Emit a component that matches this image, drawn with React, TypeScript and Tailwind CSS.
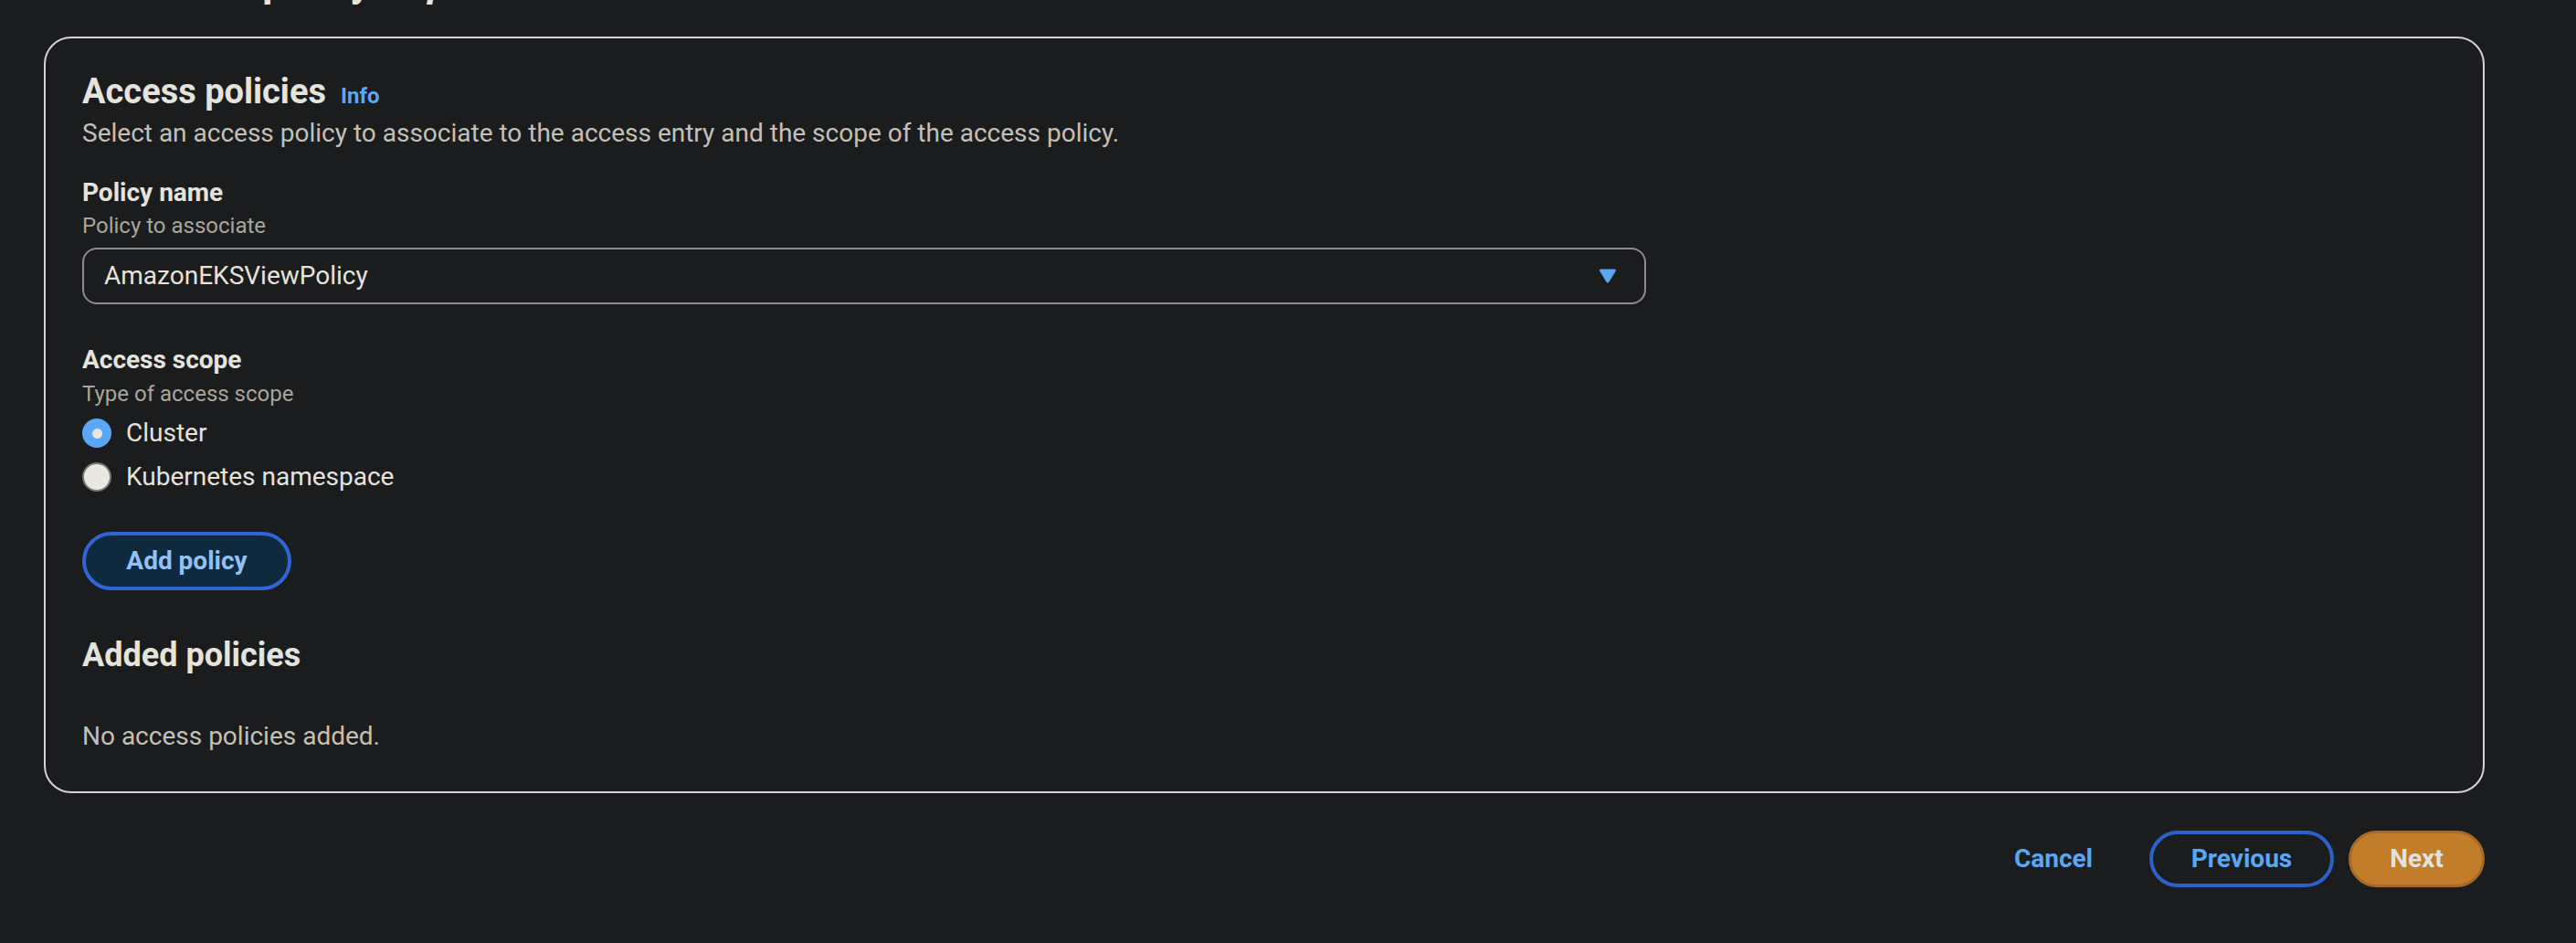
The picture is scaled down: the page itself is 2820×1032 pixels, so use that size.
import React from "react";

function Radio({ checked, label }: { checked?: boolean; label: string }) {
  return (
    <label className="flex h-[40px] items-center gap-[16px]">
      {checked ? (
        <span className="flex h-[32px] w-[32px] items-center justify-center rounded-full bg-[#5aa7f5]">
          <span className="h-[11px] w-[11px] rounded-full bg-[#e6e4df]" />
        </span>
      ) : (
        <span className="h-[32px] w-[32px] rounded-full border-2 border-[#7b776f] bg-[#e9e8e3]" />
      )}
      <span className="text-[28px] leading-[40px] text-[#e5e3de]">{label}</span>
    </label>
  );
}

function Caret() {
  return (
    <svg width="20" height="16" viewBox="0 0 20 16" aria-hidden="true">
      <polygon
        points="2.5,2 17.5,2 10,14"
        fill="#5aa7f5"
        stroke="#5aa7f5"
        strokeWidth="3"
        strokeLinejoin="round"
      />
    </svg>
  );
}

export default function App() {
  return (
    <div className="min-h-screen overflow-hidden bg-[#1b1c1e] pl-[48px] pr-[100px] font-['Roboto',sans-serif] text-[#e5e3de]">
      {/* page title, scrolled mostly out of view */}
      <h1 className="-mt-[45px] h-[52px] text-[44px] font-bold leading-[52px] text-[#e5e3de]">
        Add access policy - <i>optional</i>
      </h1>

      <section className="mt-[33px] rounded-[30px] border-2 border-[#d3d3d7] bg-[#1b1c1e] px-[40px] pb-[40px] pt-[34px]">
        <div className="flex items-baseline gap-[16px]">
          <h2 className="text-[38px] font-bold leading-[48px] text-[#e5e3de]">Access policies</h2>
          <a className="text-[24px] font-bold text-[#5aa7f5]">Info</a>
        </div>
        <p className="mt-[2px] text-[28px] leading-[40px] text-[#c4c0b8]">
          Select an access policy to associate to the access entry and the scope of the access policy.
        </p>

        <div className="mt-[25px] text-[28px] font-bold leading-[40px] text-[#e5e3de]">Policy name</div>
        <div className="text-[24px] leading-[32px] text-[#a9a59c]">Policy to associate</div>
        <div className="mt-[8px] flex h-[62px] w-[1712px] items-center justify-between rounded-[16px] border-2 border-[#8c8c92] pl-[22px] pr-[30px]">
          <span className="text-[28px] leading-[40px] text-[#e5e3de]">AmazonEKSViewPolicy</span>
          <Caret />
        </div>

        <div className="mt-[41px] text-[28px] font-bold leading-[40px] text-[#e5e3de]">Access scope</div>
        <div className="mt-[1px] text-[24px] leading-[32px] text-[#a9a59c]">Type of access scope</div>
        <div className="mt-[7px] flex flex-col gap-[8px]">
          <Radio checked label="Cluster" />
          <Radio label="Kubernetes namespace" />
        </div>

        <button className="mt-[40px] flex h-[64px] w-[229px] items-center justify-center rounded-full border-4 border-[#2f65d4] bg-[#0f2a3e] text-[28px] font-bold leading-[40px] text-[#90c2f5]">
          Add policy
        </button>

        <h3 className="mt-[49px] text-[36px] font-bold leading-[44px] text-[#e5e3de]">Added policies</h3>
        <p className="mt-[47px] text-[28px] leading-[40px] text-[#c4c0b8]">No access policies added.</p>
      </section>

      <div className="mt-[41px] flex justify-end gap-[16px]">
        <button className="flex h-[62px] items-center rounded-full border-2 border-transparent px-[44px] text-[28px] font-bold text-[#5aa7f5]">
          Cancel
        </button>
        <button className="flex h-[62px] w-[202px] items-center justify-center rounded-full border-4 border-[#2b60c8] text-[28px] font-bold text-[#5aa7f5]">
          Previous
        </button>
        <button className="flex h-[62px] w-[149px] items-center justify-center rounded-full border-[3px] border-[#a56a27] bg-[#c27d2b] text-[28px] font-bold text-[#e3e1dc]">
          Next
        </button>
      </div>
    </div>
  );
}
